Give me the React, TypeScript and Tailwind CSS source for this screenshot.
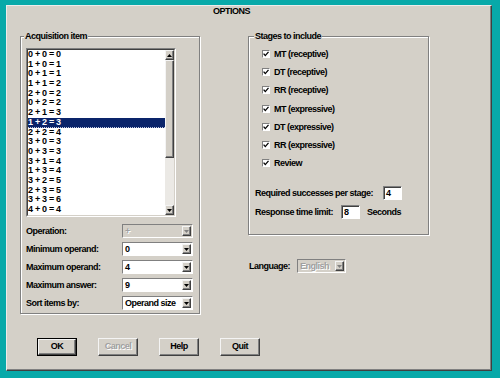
import React from "react";

const items = [
  "0 + 0 = 0",
  "1 + 0 = 1",
  "0 + 1 = 1",
  "1 + 1 = 2",
  "2 + 0 = 2",
  "0 + 2 = 2",
  "2 + 1 = 3",
  "1 + 2 = 3",
  "2 + 2 = 4",
  "3 + 0 = 3",
  "0 + 3 = 3",
  "3 + 1 = 4",
  "1 + 3 = 4",
  "3 + 2 = 5",
  "2 + 3 = 5",
  "3 + 3 = 6",
  "4 + 0 = 4",
];

function Tri({ up = false, gray = false }: { up?: boolean; gray?: boolean }) {
  return (
    <svg width="5" height="3" viewBox="0 0 5 3" className="block">
      <path d={up ? "M2.5 0 L5 3 L0 3 Z" : "M0 0 L5 0 L2.5 3 Z"} fill={gray ? "#808080" : "#000"} />
    </svg>
  );
}

function ArrowBtn({ up = false, gray = false }: { up?: boolean; gray?: boolean }) {
  return (
    <div className="w-[9px] h-full flex items-center justify-center bg-[#d4d0c8] border border-t-[#f4f4f4] border-l-[#f4f4f4] border-b-[#404040] border-r-[#404040] shadow-[inset_-1px_-1px_0_#808080]">
      <Tri up={up} gray={gray} />
    </div>
  );
}

function Combo({ value, disabled = false, wide = true }: { value: string; disabled?: boolean; wide?: boolean }) {
  return (
    <div
      className={
        (wide ? "w-[71px] " : "w-[49px] ") +
        "h-[14px] flex border border-t-[#808080] border-l-[#808080] border-b-white border-r-white " +
        (disabled ? "bg-[#d4d0c8]" : "bg-white")
      }
    >
      <div
        className={
          "flex-1 pl-[2px] leading-[12px] whitespace-nowrap overflow-hidden " +
          (disabled ? "text-[#a0a0a0] [text-shadow:1px_1px_0_#fff]" : "text-black")
        }
      >
        {value}
      </div>
      <div className="py-[1px] pr-[1px] h-full">
        <ArrowBtn gray={disabled} />
      </div>
    </div>
  );
}

function Check({ label }: { label: string }) {
  return (
    <div className="h-[18.2px] flex items-center pl-[7px]">
      <div className="w-[8px] h-[8px] bg-white border border-t-[#808080] border-l-[#808080] border-b-white border-r-white flex items-center justify-center">
        <svg width="6" height="6" viewBox="0 0 6 6" className="block">
          <path d="M0.6 2.6 L2.3 4.6 L5.5 0.9" stroke="#000" strokeWidth="1.3" fill="none" />
        </svg>
      </div>
      <span className="ml-[4px] leading-[12px] whitespace-nowrap">{label}</span>
    </div>
  );
}

function TextBox({ value }: { value: string }) {
  return (
    <div className="w-[19px] h-[14px] bg-white border border-t-[#808080] border-l-[#808080] border-b-white border-r-white shadow-[inset_1px_1px_0_#404040] pl-[2px] leading-[12px]">
      {value}
    </div>
  );
}

function Button({ label, def = false, disabled = false }: { label: string; def?: boolean; disabled?: boolean }) {
  return (
    <div className={"w-[40px] h-[18px] " + (def ? "border border-black" : "")}>
      <div
        className={
          "w-full h-full flex items-center justify-center bg-[#d4d0c8] border border-t-[#f4f4f4] border-l-[#f4f4f4] border-b-[#404040] border-r-[#404040] shadow-[inset_-1px_-1px_0_#808080] " +
          (disabled ? "text-[#a0a0a0] [text-shadow:1px_1px_0_#fff]" : "text-black")
        }
      >
        {label}
      </div>
    </div>
  );
}

export default function App() {
  return (
    <div className="w-[500px] h-[378px] bg-[#08a9a9] pt-[5px] pl-[6px] overflow-hidden font-[family-name:'Liberation_Sans',Arial,sans-serif] font-bold text-[9px] tracking-[-0.5px] text-black">
      <div className="w-[486px] h-[366px] bg-[#d4d0c8] border border-t-[#ececec] border-l-[#ececec] border-r-[#404040] border-b-[#404040] shadow-[inset_-1px_-1px_0_#808080]">
        <div className="h-[11px] leading-[11px] pl-[206px]">OPTIONS</div>

        <div className="flex items-start mt-[13px]">
          {/* Left group */}
          <fieldset className="ml-[13px] w-[180px] border border-[#808080] shadow-[inset_1px_1px_0_#fff,1px_1px_0_#fff] pl-[5px] pt-[6px] pb-[3px] m-0">
            <legend className="ml-[-2px] px-[1px] leading-[12px] bg-[#d4d0c8]">Acquisition item</legend>
            <div className="w-[150px] h-[169px] flex border border-t-[#808080] border-l-[#808080] border-b-white border-r-white">
              <div className="flex-1 flex border border-t-[#404040] border-l-[#404040] border-b-[#d4d0c8] border-r-[#d4d0c8] min-w-0">
                <div className="flex-1 bg-white overflow-hidden tracking-[-0.3px]">
                  {items.map((it, i) =>
                    i === 7 ? (
                      <div
                        key={i}
                        className="h-[9.7px] leading-[9.7px] bg-[#0a246a] text-white border-b border-dotted border-[#c0c8e0]"
                      >
                        {it}
                      </div>
                    ) : (
                      <div key={i} className="h-[9.7px] leading-[9.7px]">
                        {it}
                      </div>
                    )
                  )}
                </div>
                <div className="w-[9px] flex flex-col bg-[#ebe9e5]">
                  <div className="h-[10px]">
                    <ArrowBtn up />
                  </div>
                  <div className="h-[98px] bg-[#d4d0c8] border border-t-[#f4f4f4] border-l-[#f4f4f4] border-b-[#404040] border-r-[#404040] shadow-[inset_-1px_-1px_0_#808080]" />
                  <div className="flex-1" />
                  <div className="h-[10px]">
                    <ArrowBtn />
                  </div>
                </div>
              </div>
            </div>

            <div className="mt-[7px] flex flex-col gap-[4px]">
              {[
                ["Operation:", "+", true],
                ["Minimum operand:", "0", false],
                ["Maximum operand:", "4", false],
                ["Maximum answer:", "9", false],
                ["Sort items by:", "Operand size", false],
              ].map(([l, v, d], i) => (
                <div key={i} className="flex items-center h-[14px]">
                  <div className="w-[96px] leading-[12px] whitespace-nowrap">{l as string}</div>
                  <Combo value={v as string} disabled={d as boolean} />
                </div>
              ))}
            </div>
          </fieldset>

          {/* Right column */}
          <div className="ml-[48px] flex flex-col">
            <fieldset className="w-[181px] border border-[#808080] shadow-[inset_1px_1px_0_#fff,1px_1px_0_#fff] pl-[6px] pt-[3px] pb-[15px] m-0">
              <legend className="ml-[-1px] px-[1px] leading-[12px] bg-[#d4d0c8]">Stages to include</legend>
              <Check label="MT (receptive)" />
              <Check label="DT (receptive)" />
              <Check label="RR (receptive)" />
              <Check label="MT (expressive)" />
              <Check label="DT (expressive)" />
              <Check label="RR (expressive)" />
              <Check label="Review" />
              <div className="mt-[14px] h-[14px] flex items-center">
                <span className="leading-[12px] whitespace-nowrap">Required successes per stage:</span>
                <div className="ml-[10px]">
                  <TextBox value="4" />
                </div>
              </div>
              <div className="mt-[5px] h-[14px] flex items-center">
                <span className="leading-[12px] whitespace-nowrap">Response time limit:</span>
                <div className="ml-[8px]">
                  <TextBox value="8" />
                </div>
                <span className="ml-[7px] leading-[12px]">Seconds</span>
              </div>
            </fieldset>

            <div className="mt-[24px] flex items-center h-[14px] pl-[1px]">
              <span className="w-[48px] leading-[12px]">Language:</span>
              <Combo value="English" disabled wide={false} />
            </div>
          </div>
        </div>

        <div className="flex gap-[21px] ml-[30px] mt-[24px]">
          <Button label="OK" def />
          <Button label="Cancel" disabled />
          <Button label="Help" />
          <Button label="Quit" />
        </div>
      </div>
    </div>
  );
}
